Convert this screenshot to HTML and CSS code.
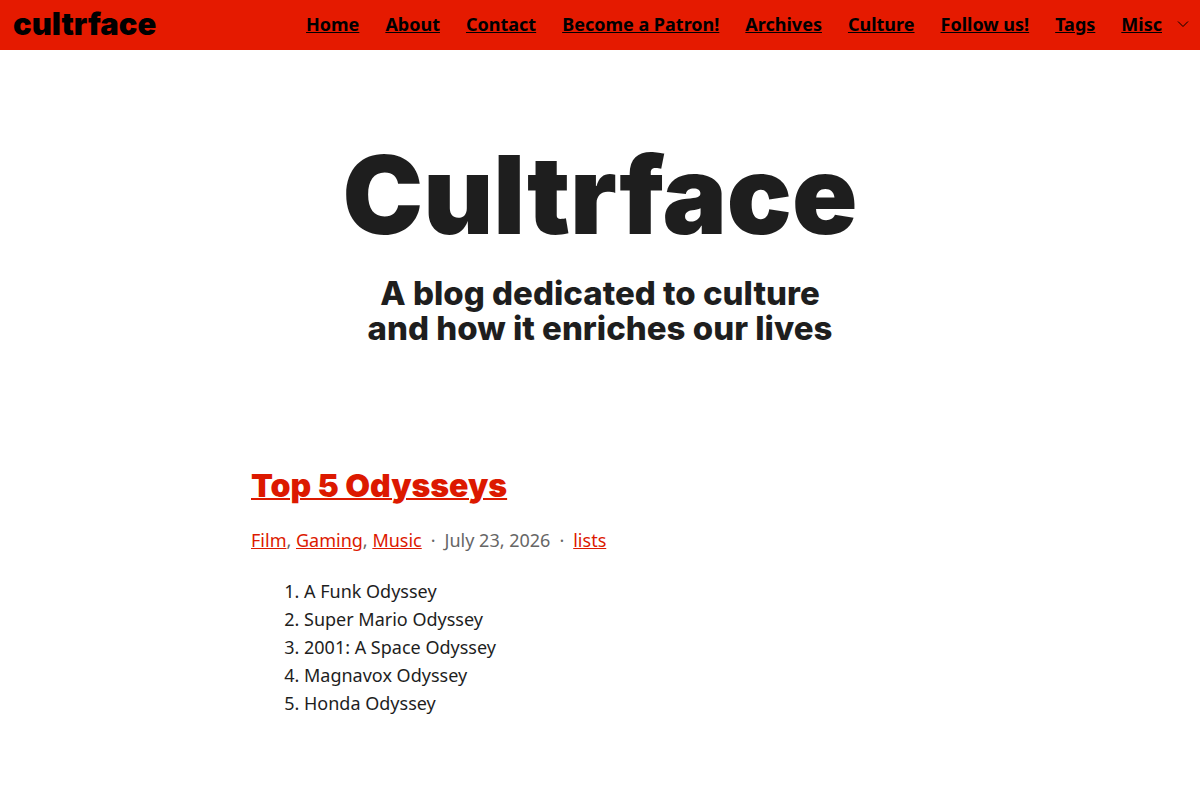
FILE: index.html
```html
<!DOCTYPE html>
<html lang="en">
<head>
    <meta charset="UTF-8">
    <meta name="viewport" content="width=device-width, initial-scale=1.0">
    <title>Cultrface</title>
    <link rel="stylesheet" href="styles.css">
</head>
<body>
    <header class="site-header">
        <a class="logo" href="/">cultrface</a>
        <nav class="menu">
            <a href="/">Home</a>
            <a href="/about">About</a>
            <a href="/contact">Contact</a>
            <a href="/patron">Become a Patron!</a>
            <a href="/archives">Archives</a>
            <a href="/culture">Culture</a>
            <a href="/follow">Follow us!</a>
            <a href="/tags">Tags</a>
            <div class="submenu">
                <a href="/misc">Misc</a>
                <button class="toggle" type="button" aria-label="Misc submenu">
                    <svg width="12" height="12" viewBox="0 0 12 12" fill="none" stroke="currentColor"><path d="M1 3.5l5 5 5-5"/></svg>
                </button>
            </div>
        </nav>
    </header>

    <section class="hero">
        <h1>Cultrface</h1>
        <h2>A blog dedicated to culture<br>and how it enriches our lives</h2>
    </section>

    <main class="posts">
        <article class="post">
            <h2><a href="/top-5-odysseys">Top 5 Odysseys</a></h2>
            <div class="meta">
                <span><a href="/film">Film</a>, <a href="/gaming">Gaming</a>, <a href="/music">Music</a></span>
                <span>·</span>
                <time datetime="2026-07-23">July 23, 2026</time>
                <span>·</span>
                <a href="/lists">lists</a>
            </div>
            <ol>
                <li>A Funk Odyssey</li>
                <li>Super Mario Odyssey</li>
                <li>2001: A Space Odyssey</li>
                <li>Magnavox Odyssey</li>
                <li>Honda Odyssey</li>
            </ol>
        </article>
    </main>
</body>
</html>
```
FILE: styles.css
```css
body {
    margin: 0;
    background-color: #fff;
    color: #1e1e1e;
    font-family: "Noto Sans", sans-serif;
    font-size: 18px;
    line-height: 28px;
}
.site-header {
    display: flex;
    align-items: center;
    justify-content: space-between;
    height: 48px;
    padding: 0 11px 2px 13px;
    background-color: #e51a00;
}
.site-header a {
    color: #000;
}
.logo {
    font-family: Inter, sans-serif;
    font-size: 31px;
    font-weight: 900;
    text-decoration: none;
}
.menu {
    display: flex;
    align-items: center;
    gap: 26px;
    font-weight: 700;
}
.submenu {
    display: flex;
    align-items: center;
    gap: 15px;
}
.toggle {
    display: flex;
    padding: 0;
    border: 0;
    background: none;
    color: #000;
}
.hero {
    padding: 80px 20px 120px;
    text-align: center;
}
.hero h1 {
    margin: 0;
    font-family: Inter, sans-serif;
    font-size: 108px;
    font-weight: 900;
    line-height: 130px;
}
.hero h2 {
    margin: 16px 0 0;
    font-family: Inter, sans-serif;
    font-size: 33px;
    font-weight: 800;
    line-height: 35px;
}
.posts {
    max-width: 698px;
    margin: 0 auto;
    padding: 0 20px;
}
.post h2 {
    margin: 0;
    font-family: Inter, sans-serif;
    font-size: 32px;
    font-weight: 900;
    line-height: 40px;
}
.post a {
    color: #dc1900;
}
.post h2 a {
    text-decoration-thickness: 2px;
}
.meta {
    display: flex;
    gap: 9px;
    margin: 20px 0 23px;
    color: #666;
}
.post ol {
    margin: 0;
    padding-left: 53px;
}
```
